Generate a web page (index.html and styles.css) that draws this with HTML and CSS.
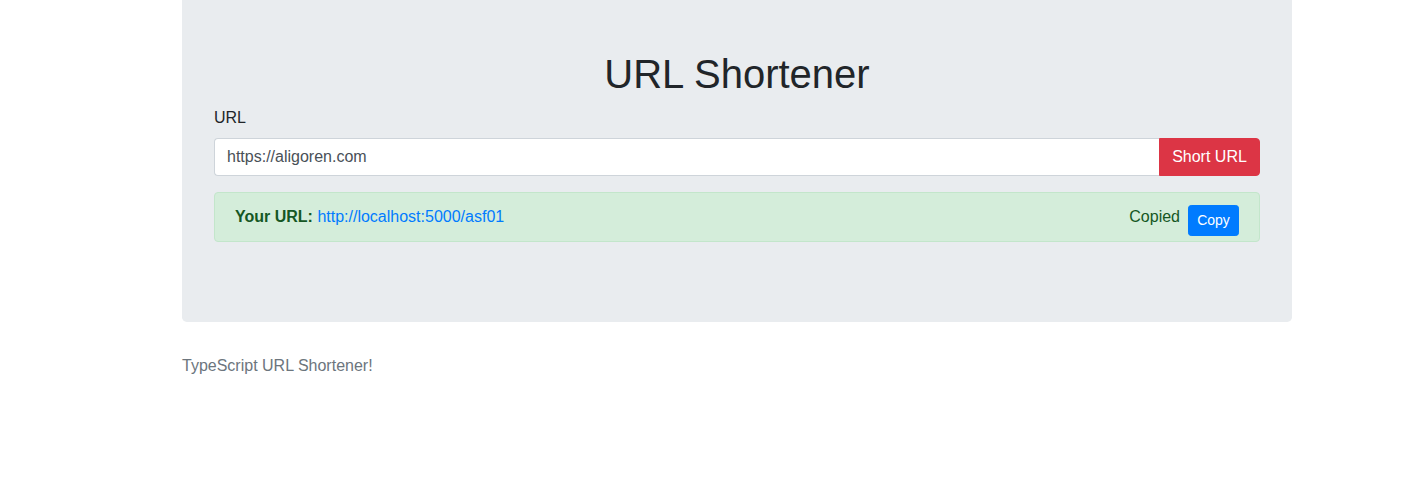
FILE: index.html
```html
<!DOCTYPE html>
<html>
<head>
<meta charset="utf-8">
<title>URL Shortener</title>
<link rel="stylesheet" href="styles.css">
</head>
<body>
<div class="container">
  <div class="jumbotron">
    <h1 class="title">URL Shortener</h1>
    <div class="form-group">
      <label class="label" for="url">URL</label>
      <div class="input-group">
        <input id="url" class="form-control" type="text" value="https://aligoren.com">
        <button class="btn btn-danger" type="button">Short URL</button>
      </div>
    </div>
    <div class="alert">
      <div class="result"><strong>Your URL:</strong> <a class="link" href="#">http://localhost:5000/asf01</a></div>
      <div class="actions">
        <span class="copied">Copied</span>
        <button class="btn-sm" type="button">Copy</button>
      </div>
    </div>
  </div>
  <p class="footer">TypeScript URL Shortener!</p>
</div>
</body>
</html>
```

FILE: styles.css
```css
* { box-sizing: border-box; }
html, body { margin: 0; padding: 0; }
body {
  font-family: "Liberation Sans", Arial, sans-serif;
  font-size: 16px;
  line-height: 1.5;
  color: #212529;
  background: #fff;
}
.container {
  width: 1110px;
  margin-left: 182px;
}
.jumbotron {
  background: #e9ecef;
  padding: 50px 32px 64px;
  border-radius: 0 0 4.8px 4.8px;
  margin-bottom: 32px;
}
.title {
  margin: 0 0 8px;
  font-size: 40px;
  font-weight: 500;
  line-height: 1.2;
  text-align: center;
}
.form-group { margin-bottom: 16px; }
.label {
  display: block;
  margin-bottom: 8px;
}
.input-group {
  display: flex;
  height: 38px;
}
.form-control {
  flex: 1;
  min-width: 0;
  height: 38px;
  padding: 6px 12px;
  font-family: inherit;
  font-size: 16px;
  line-height: 1.5;
  color: #495057;
  background: #fff;
  border: 1px solid #ced4da;
  border-right: 0;
  border-radius: 4px 0 0 4px;
  outline: none;
}
.btn {
  font-family: inherit;
  font-size: 16px;
  line-height: 1.5;
  padding: 6px 12px;
  border: 1px solid transparent;
  cursor: pointer;
}
.btn-danger {
  color: #fff;
  background: #dc3545;
  border-color: #dc3545;
  border-radius: 0 4px 4px 0;
  width: 101px;
}
.alert {
  display: flex;
  justify-content: space-between;
  align-items: flex-start;
  padding: 12px 20px;
  height: 50px;
  margin-bottom: 16px;
  color: #155724;
  background: #d4edda;
  border: 1px solid #c3e6cb;
  border-radius: 4px;
}
.result { line-height: 24px; }
.result strong { font-weight: 700; }
.link { color: #007bff; text-decoration: none; }
.actions {
  display: flex;
  align-items: flex-start;
  height: 24px;
}
.copied { line-height: 24px; }
.btn-sm {
  margin-left: 8px;
  height: 31px;
  width: 51px;
  padding: 4px 8px;
  font-family: inherit;
  font-size: 14px;
  line-height: 1.5;
  color: #fff;
  background: #007bff;
  border: 1px solid #007bff;
  border-radius: 3.2px;
  cursor: pointer;
}
.footer {
  margin: 0;
  color: #6c757d;
}
```
